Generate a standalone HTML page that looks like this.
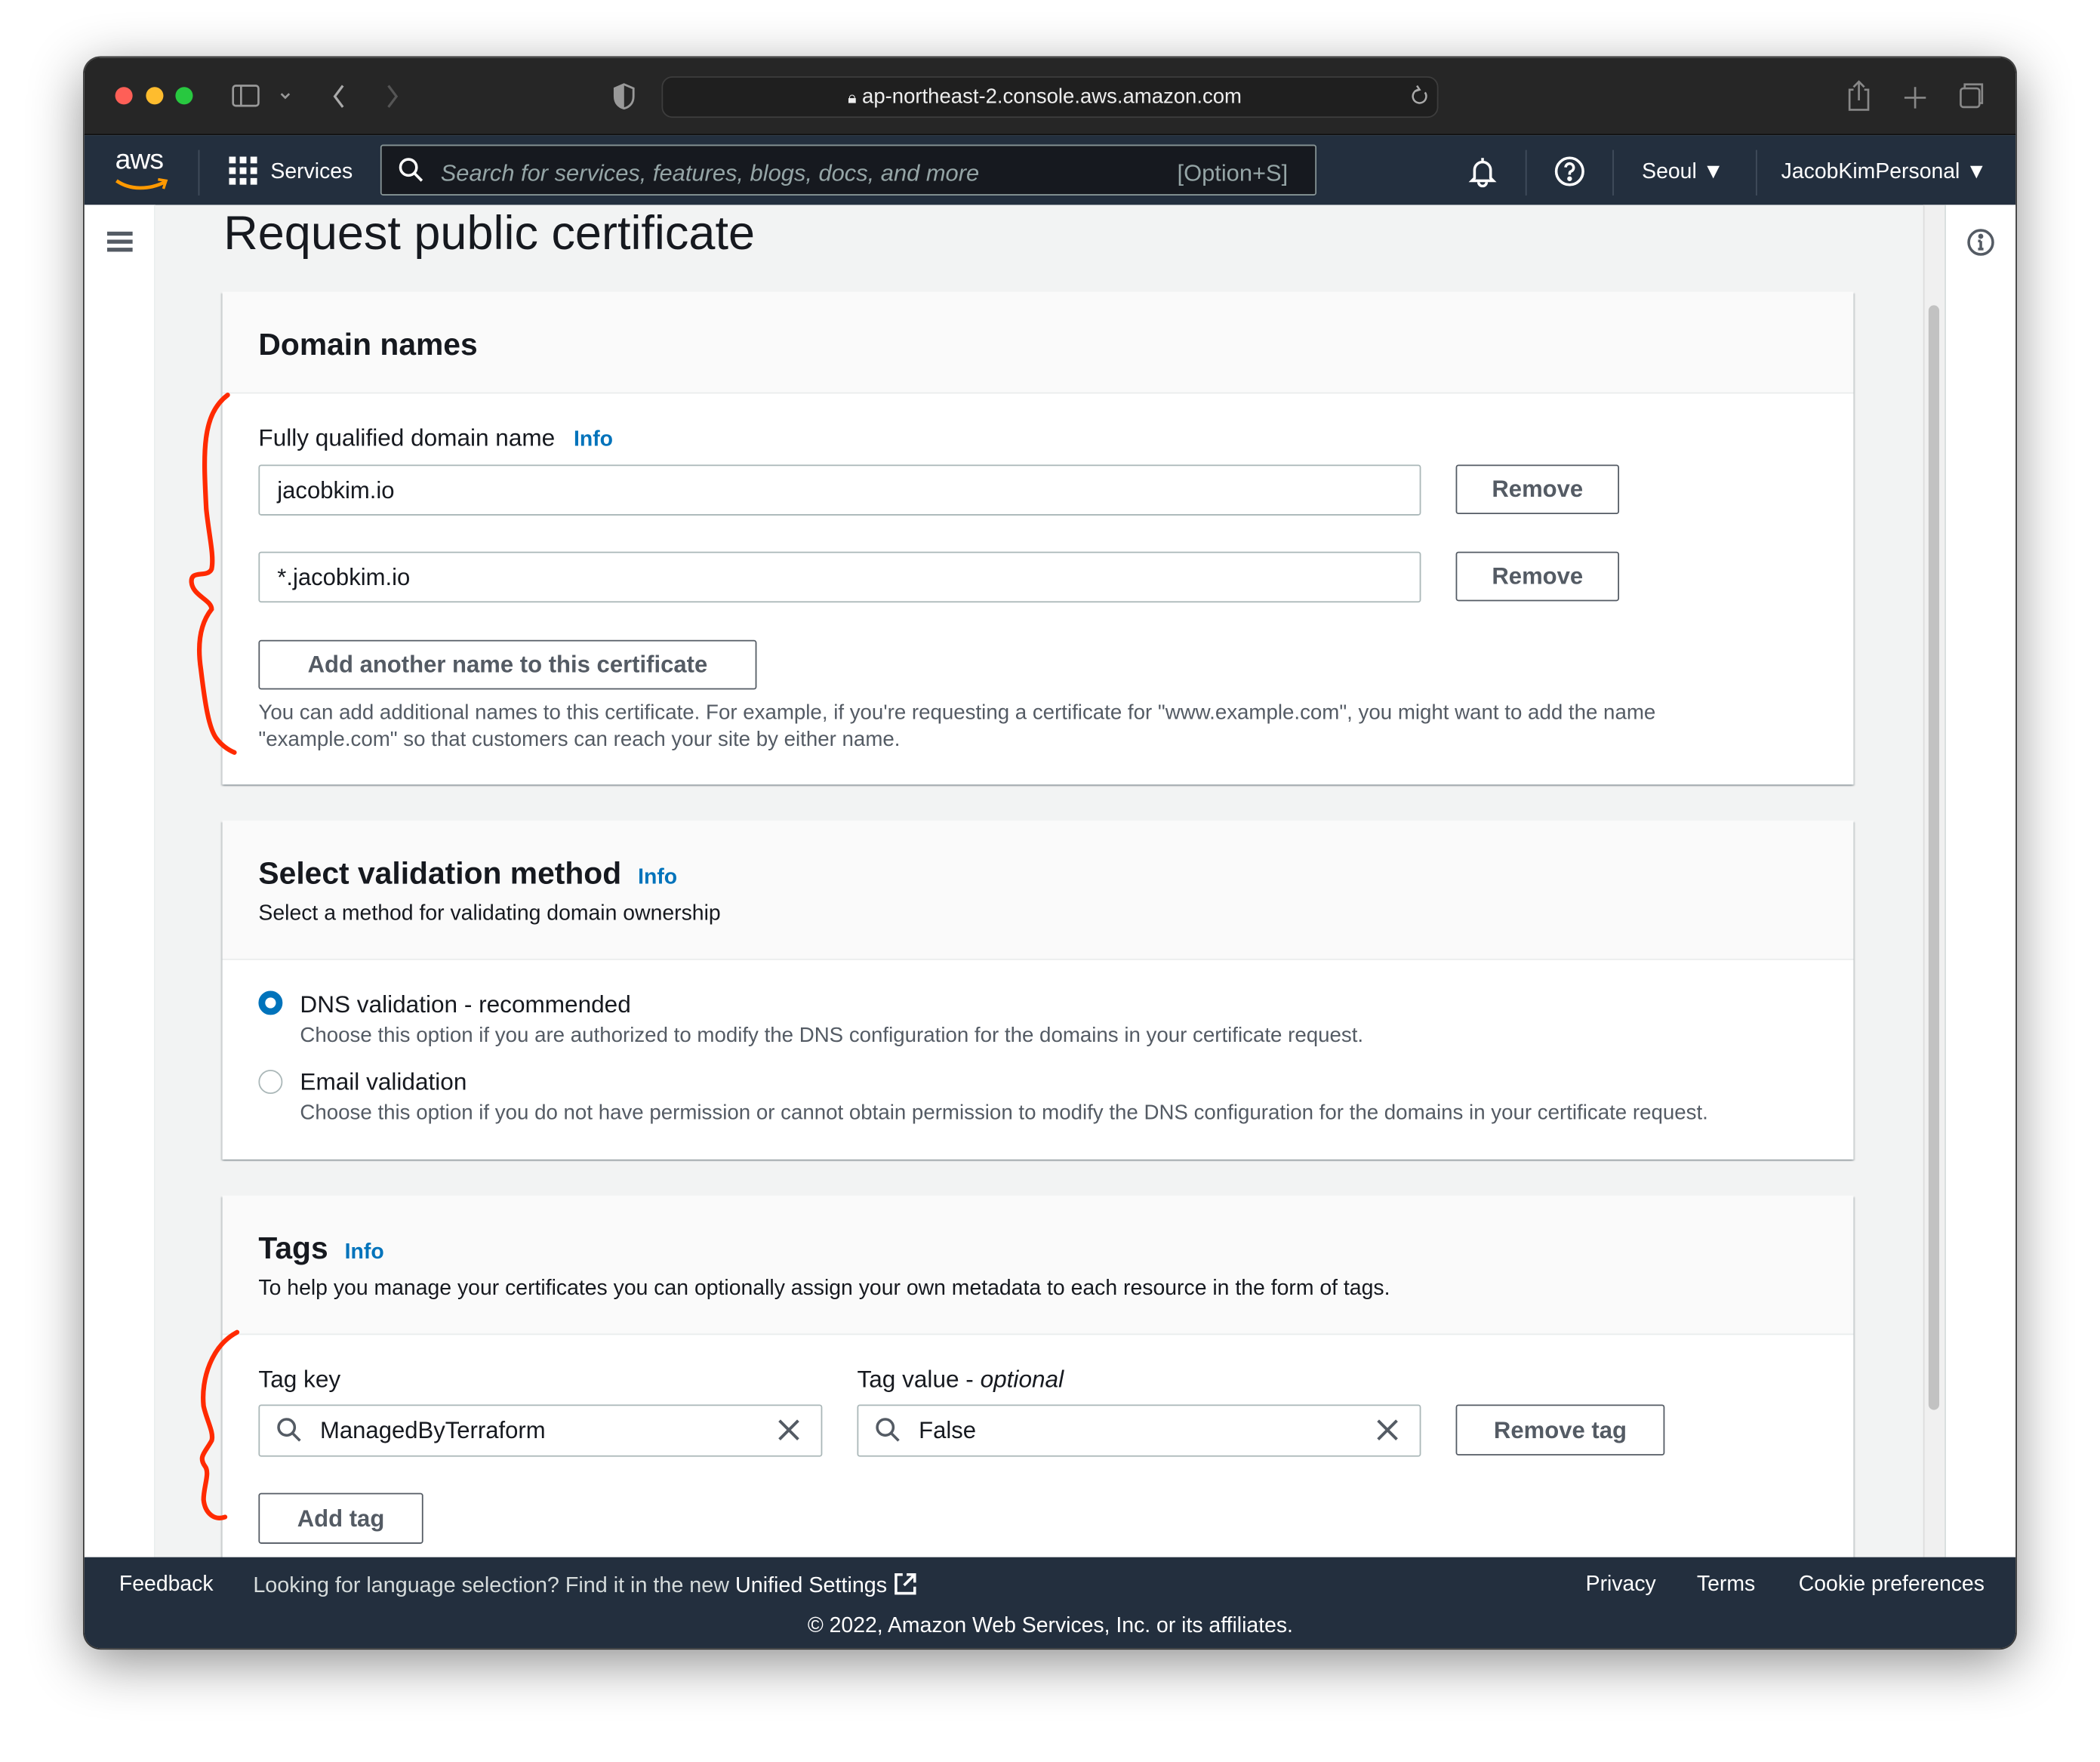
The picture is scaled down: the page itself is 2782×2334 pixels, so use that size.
<!DOCTYPE html>
<html><head><meta charset="utf-8"><style>
*{margin:0;padding:0;box-sizing:border-box}
html,body{width:2782px;height:2334px;overflow:hidden;background:#fff}
#s{position:absolute;left:0;top:0;width:1568px;height:1316px;transform:scale(1.7742,1.7736);transform-origin:0 0;font-family:"Liberation Sans",sans-serif;background:#fff}
.a{position:absolute;white-space:nowrap}
.t{line-height:20px}
#win{position:absolute;left:63px;top:43px;width:1442px;height:1188px;border-radius:12px;overflow:hidden;background:#f2f3f3;box-shadow:0 10px 40px rgba(0,0,0,.45),0 0 0 1px #444}
.btn{position:absolute;border:1.5px solid #545b64;border-radius:2px;background:#fff;color:#545b64;font-weight:bold;font-size:17.5px;display:flex;align-items:center;justify-content:center}
.inp{position:absolute;border:1px solid #aab7b8;border-radius:2px;background:#fff;font-size:17.5px;color:#16191f;display:flex;align-items:center}
.panel{position:absolute;left:103px;width:1218px;background:#fff;box-shadow:0 1px 1px rgba(0,28,36,.3),1px 1px 1px rgba(0,28,36,.15),-1px 1px 1px rgba(0,28,36,.15)}
.ph{position:absolute;left:0;top:0;width:100%;background:#fafafa;border-bottom:1px solid #eaeded}
.info{color:#0073bb;font-weight:bold;font-size:16px}
.gray{color:#545b64;font-size:15.6px}
.lab{font-size:17.8px;color:#16191f}
.h{font-size:23px;font-weight:bold;color:#16191f;line-height:28px}
</style></head><body><div id="s">
<div id="win">
 <div class="a" style="left:0;top:0;width:1442px;height:58px;background:#262626;border-bottom:1px solid #111"></div>
 <div class="a" style="left:23px;top:22px;width:13px;height:13px;border-radius:50%;background:#fe5f57"></div>
 <div class="a" style="left:46px;top:22px;width:13px;height:13px;border-radius:50%;background:#febc2e"></div>
 <div class="a" style="left:68px;top:22px;width:13px;height:13px;border-radius:50%;background:#28c840"></div>
 <svg class="a" style="left:105px;top:18px" width="60" height="22" viewBox="0 0 60 22" fill="none" stroke="#999" stroke-width="1.5"><rect x="6" y="3" width="19" height="15" rx="2"/><line x1="12" y1="3" x2="12" y2="18"/><path d="M42 9l3 3 3-3"/></svg>
 <svg class="a" style="left:180px;top:16px" width="60" height="26" viewBox="0 0 60 26" fill="none" stroke-width="1.8"><path d="M13 5L7 13l6 8" stroke="#aaa"/><path d="M47 5l6 8-6 8" stroke="#555"/></svg>
 <svg class="a" style="left:393px;top:18px" width="20" height="22" viewBox="0 0 20 22"><path d="M10 2L3 5v6c0 5 3 8 7 9 4-1 7-4 7-9V5z" fill="none" stroke="#999" stroke-width="1.6"/><path d="M10 2L3 5v6c0 5 3 8 7 9z" fill="#999"/></svg>
 <div class="a" style="left:431px;top:14px;width:580px;height:31px;border-radius:8px;background:#1f1f1f;border:1px solid #3d3d3d"></div>
 <div class="a t" style="left:570px;top:20px;color:#eee;font-size:15.5px"><span style="font-size:12px">&#128274;&#xFE0E;</span> ap-northeast-2.console.aws.amazon.com</div>
 <svg class="a" style="left:989px;top:20px" width="16" height="18" viewBox="0 0 16 18" fill="none" stroke="#aaa" stroke-width="1.4"><path d="M12 6a5 5 0 1 1-5-2"/><path d="M6 1l2 3-3 1"/></svg>
 <svg class="a" style="left:1312px;top:14px" width="120" height="30" viewBox="0 0 120 30" fill="none" stroke="#888" stroke-width="1.5"><path d="M9 10H6v15h14V10h-3M13 4v14M9 8l4-4 4 4"/><path d="M55 8v16M47 16h16"/><rect x="89" y="9" width="14" height="14" rx="2"/><path d="M92 9V6h13v14h-2"/></svg>
 <div class="a" style="left:0;top:58px;width:1442px;height:52px;background:#232f3e"></div>
 <div class="a" style="left:23px;top:65px;color:#fff;font-size:21px;letter-spacing:-.5px">aws</div>
 <svg class="a" style="left:22px;top:89px" width="42" height="12" viewBox="0 0 42 12"><path d="M2 3c10 7 24 7 36 1" fill="none" stroke="#ff9900" stroke-width="2.6"/><path d="M33 2l6 1-2 6" fill="none" stroke="#ff9900" stroke-width="2"/></svg>
 <div class="a" style="left:85px;top:69px;width:1px;height:34px;background:#414d5c"></div>
 <svg class="a" style="left:108px;top:74px" width="21" height="21" viewBox="0 0 21 21" fill="#fff"><rect x="0" y="0" width="5" height="5"/><rect x="8" y="0" width="5" height="5"/><rect x="16" y="0" width="5" height="5"/><rect x="0" y="8" width="5" height="5"/><rect x="8" y="8" width="5" height="5"/><rect x="16" y="8" width="5" height="5"/><rect x="0" y="16" width="5" height="5"/><rect x="8" y="16" width="5" height="5"/><rect x="16" y="16" width="5" height="5"/></svg>
 <div class="a t" style="left:139px;top:76px;color:#fff;font-size:16px">Services</div>
 <div class="a" style="left:221px;top:65px;width:699px;height:38px;background:#16191f;border:1px solid #879596;border-radius:2px"></div>
 <svg class="a" style="left:234px;top:74px" width="20" height="20" viewBox="0 0 20 20" fill="none" stroke="#fff" stroke-width="2"><circle cx="8" cy="8" r="6"/><path d="M12.5 12.5L18 18"/></svg>
 <div class="a t" style="left:266px;top:76px;color:#95a5a6;font-size:17.4px;font-style:italic">Search for services, features, blogs, docs, and more</div>
 <div class="a t" style="left:816px;top:76px;color:#95a5a6;font-size:17.4px">[Option+S]</div>
 <svg class="a" style="left:1033px;top:73px" width="22" height="24" viewBox="0 0 22 24" fill="none" stroke="#fff" stroke-width="2"><path d="M11 2v2M5 17V11a6 6 0 0 1 12 0v6l2 2H3z"/><path d="M8 20a3 3 0 0 0 6 0"/></svg>
 <div class="a" style="left:1076px;top:69px;width:1px;height:34px;background:#414d5c"></div>
 <svg class="a" style="left:1097px;top:73px" width="24" height="24" viewBox="0 0 24 24" fill="none" stroke="#fff" stroke-width="2"><circle cx="12" cy="12" r="10"/><path d="M9 9a3 3 0 1 1 4 3c-1 .5-1 1-1 2.5"/><circle cx="12" cy="17.5" r=".8" fill="#fff"/></svg>
 <div class="a" style="left:1141px;top:69px;width:1px;height:34px;background:#414d5c"></div>
 <div class="a t" style="left:1163px;top:76px;color:#fff;font-size:16px">Seoul ▼</div>
 <div class="a" style="left:1248px;top:69px;width:1px;height:34px;background:#414d5c"></div>
 <div class="a t" style="left:1267px;top:76px;color:#fff;font-size:16px">JacobKimPersonal ▼</div>
 <div class="a" style="left:0;top:110px;width:53px;height:1010px;background:#fff;border-right:1px solid #eaeded"></div>
 <div class="a" style="left:17px;top:130px;width:19px;height:2.5px;background:#545b64;box-shadow:0 6px 0 #545b64,0 12px 0 #545b64"></div>
 <div class="a" style="left:1389px;top:110px;width:53px;height:1010px;background:#fff;border-left:1px solid #d5dbdb"></div>
 <svg class="a" style="left:1405px;top:127px" width="22" height="22" viewBox="0 0 22 22" fill="none" stroke="#545b64" stroke-width="2"><circle cx="11" cy="11" r="9"/><path d="M11 10v6M9 16h4M9 10h2"/><circle cx="11" cy="6.5" r=".9" fill="#545b64"/></svg>
 <div class="a" style="left:1373px;top:110px;width:16px;height:1010px;background:#f0f0f0;border-left:1px solid #ddd"></div>
 <div class="a" style="left:1377px;top:185px;width:8px;height:825px;border-radius:4px;background:#c2c2c2"></div>
 <div class="a" style="left:104px;top:110px;line-height:42px;font-size:35.5px;color:#16191f">Request public certificate</div>
 <div class="panel" style="top:175px;height:368px">
  <div class="ph" style="height:76px"></div>
  <div class="a h" style="left:27px;top:25px">Domain names</div>
  <div class="a t lab" style="left:27px;top:99px">Fully qualified domain name <span class="info" style="margin-left:9px">Info</span></div>
  <div class="inp" style="left:27px;top:129px;width:868px;height:38px;padding-left:13px">jacobkim.io</div>
  <div class="btn" style="left:921px;top:129px;width:122px;height:37px">Remove</div>
  <div class="inp" style="left:27px;top:194px;width:868px;height:38px;padding-left:13px">*.jacobkim.io</div>
  <div class="btn" style="left:921px;top:194px;width:122px;height:37px">Remove</div>
  <div class="btn" style="left:27px;top:260px;width:372px;height:37px">Add another name to this certificate</div>
  <div class="a gray" style="left:27px;top:305px;line-height:19.5px">You can add additional names to this certificate. For example, if you're requesting a certificate for "www.example.com", you might want to add the name<br>"example.com" so that customers can reach your site by either name.</div>
 </div>
 <div class="panel" style="top:570px;height:253px">
  <div class="ph" style="height:104px"></div>
  <div class="a h" style="left:27px;top:25px">Select validation method <span class="info" style="margin-left:6px">Info</span></div>
  <div class="a t" style="left:27px;top:60px;font-size:16px;color:#16191f">Select a method for validating domain ownership</div>
  <div class="a" style="left:27px;top:127px;width:18px;height:18px;border-radius:50%;border:5px solid #0073bb;background:#fff"></div>
  <div class="a t lab" style="left:58px;top:127px">DNS validation - recommended</div>
  <div class="a t gray" style="left:58px;top:151px">Choose this option if you are authorized to modify the DNS configuration for the domains in your certificate request.</div>
  <div class="a" style="left:27px;top:186px;width:18px;height:18px;border-radius:50%;border:1.5px solid #aab7b8;background:#fff"></div>
  <div class="a t lab" style="left:58px;top:185px">Email validation</div>
  <div class="a t gray" style="left:58px;top:209px">Choose this option if you do not have permission or cannot obtain permission to modify the DNS configuration for the domains in your certificate request.</div>
 </div>
 <div class="panel" style="top:850px;height:300px">
  <div class="ph" style="height:104px"></div>
  <div class="a h" style="left:27px;top:25px">Tags <span class="info" style="margin-left:6px">Info</span></div>
  <div class="a t" style="left:27px;top:60px;font-size:16px;color:#16191f">To help you manage your certificates you can optionally assign your own metadata to each resource in the form of tags.</div>
  <div class="a t lab" style="left:27px;top:127px">Tag key</div>
  <div class="a t lab" style="left:474px;top:127px">Tag value - <i>optional</i></div>
  <div class="inp" style="left:27px;top:156px;width:421px;height:39px;padding-left:45px">ManagedByTerraform</div>
  <svg class="a" style="left:40px;top:165px" width="20" height="20" viewBox="0 0 20 20" fill="none" stroke="#545b64" stroke-width="2"><circle cx="8" cy="8" r="6"/><path d="M12.5 12.5L18 18"/></svg>
  <svg class="a" style="left:414px;top:166px" width="18" height="18" viewBox="0 0 18 18" stroke="#545b64" stroke-width="2.2"><path d="M2 2l14 14M16 2L2 16"/></svg>
  <div class="inp" style="left:474px;top:156px;width:421px;height:39px;padding-left:45px">False</div>
  <svg class="a" style="left:487px;top:165px" width="20" height="20" viewBox="0 0 20 20" fill="none" stroke="#545b64" stroke-width="2"><circle cx="8" cy="8" r="6"/><path d="M12.5 12.5L18 18"/></svg>
  <svg class="a" style="left:861px;top:166px" width="18" height="18" viewBox="0 0 18 18" stroke="#545b64" stroke-width="2.2"><path d="M2 2l14 14M16 2L2 16"/></svg>
  <div class="btn" style="left:921px;top:156px;width:156px;height:38px">Remove tag</div>
  <div class="btn" style="left:27px;top:222px;width:123px;height:38px">Add tag</div>
 </div>
 <div class="a" style="left:0;top:1120px;width:1442px;height:68px;background:#232f3e"></div>
 <div class="a t" style="left:26px;top:1131px;color:#fff;font-size:16px">Feedback</div>
 <div class="a t" style="left:126px;top:1131px;color:#d5dbdb;font-size:16.2px">Looking for language selection? Find it in the new <span style="color:#fff">Unified Settings</span></div>
 <svg class="a" style="left:604px;top:1131px" width="18" height="18" viewBox="0 0 18 18" fill="none" stroke="#fff" stroke-width="2"><path d="M7 2H2v14h14v-5M10 2h6v6M16 2L8 10"/></svg>
 <div class="a t" style="left:1121px;top:1131px;color:#fff;font-size:16px">Privacy</div>
 <div class="a t" style="left:1204px;top:1131px;color:#fff;font-size:16px">Terms</div>
 <div class="a t" style="left:1280px;top:1131px;color:#fff;font-size:16px">Cookie preferences</div>
 <div class="a t" style="left:540px;top:1162px;color:#fff;font-size:16px">© 2022, Amazon Web Services, Inc. or its affiliates.</div>
</div>
<svg class="a" style="left:0;top:0" width="1568" height="1316" viewBox="0 0 1568 1316" fill="none" stroke="#ff2a00" stroke-width="3.5" stroke-linecap="round">
 <path d="M170 295C150 310 152 340 154 380C156 400 160 415 158 425C155 432 142 425 143 435C144 445 158 448 158 455C150 465 147 480 150 500C153 525 156 545 162 552C165 556 170 560 175 562"/>
 <path d="M177 995C158 1005 150 1030 152 1050C154 1060 160 1070 158 1076C153 1085 148 1088 153 1095C157 1100 152 1110 152 1120C153 1130 160 1136 168 1133"/>
</svg>
</div></body></html>
